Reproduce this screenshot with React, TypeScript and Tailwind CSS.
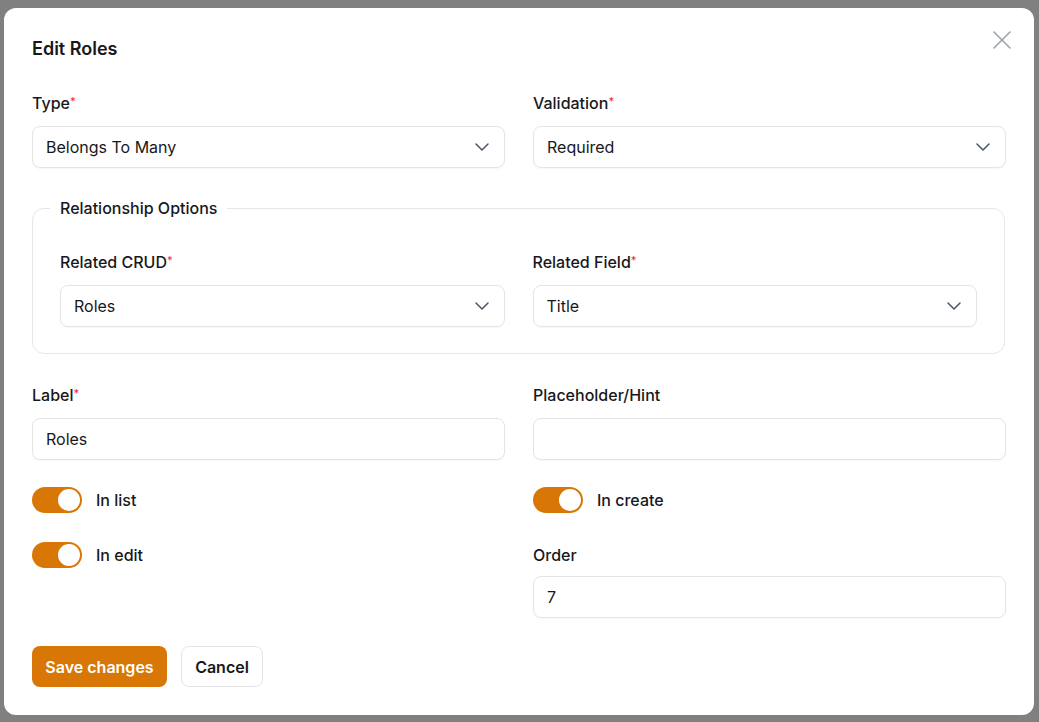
import { ChevronDown } from 'lucide-react'

function Label({ text, required }: { text: string; required?: boolean }) {
  return (
    <div className="text-[16px] leading-[24px] font-medium text-[#18181b] mb-[11px]">
      {text}
      {required && <sup className="text-red-500 text-[11px] relative -top-[4px]">*</sup>}
    </div>
  )
}

function Select({ value }: { value: string }) {
  return (
    <div className="h-[42px] rounded-[8px] border border-[#e4e4e7] shadow-[0_1px_2px_rgba(0,0,0,0.04)] flex items-center justify-between pl-[13px] pr-[10px] text-[16px] text-[#18181b]">
      <span>{value}</span>
      <ChevronDown size={24} strokeWidth={1.5} className="text-[#4b5563]" />
    </div>
  )
}

function Input({ value }: { value?: string }) {
  return (
    <div className="h-[42px] rounded-[8px] border border-[#e4e4e7] shadow-[0_1px_2px_rgba(0,0,0,0.04)] flex items-center pl-[13px] text-[16px] text-[#18181b]">
      {value}
    </div>
  )
}

function Toggle({ label }: { label: string }) {
  return (
    <div className="flex items-center h-[26px]">
      <div className="w-[50px] h-[26px] rounded-full bg-[#d97706] flex items-center justify-end pr-[2px]">
        <div className="w-[22px] h-[22px] rounded-full bg-white" />
      </div>
      <span className="ml-[14px] text-[16px] font-medium text-[#18181b]">{label}</span>
    </div>
  )
}

export default function App() {
  return (
    <div className="w-[1039px] h-[722px] bg-[#808080] flex font-['Inter',sans-serif] overflow-hidden">
      <div className="ml-[4px] mt-[8px] w-[1030px] h-[707px] bg-white rounded-[12px] px-[28px] pt-[27px] relative">
        <button className="absolute right-[22px] top-[22px] flex text-[#9ca3af]">
          <svg width="20" height="20" viewBox="0 0 20 20" fill="none" stroke="currentColor" strokeWidth="1.6" strokeLinecap="round">
            <path d="M2 2L18 18M18 2L2 18" />
          </svg>
        </button>
        <h2 className="text-[18px] leading-[28px] font-semibold text-[#18181b]">Edit Roles</h2>

        <div className="grid grid-cols-2 gap-x-[28px] mt-[28px]">
          <div>
            <Label text="Type" required />
            <Select value="Belongs To Many" />
          </div>
          <div>
            <Label text="Validation" required />
            <Select value="Required" />
          </div>
        </div>

        <fieldset className="mt-[28px] border border-[#e5e7eb] rounded-[12px] pl-[17px] pr-[17px] pb-[26px] mr-[1px]">
          <legend className="px-[10px] text-[16px] leading-[24px] font-medium text-[#18181b]">Relationship Options</legend>
          <div className="grid grid-cols-2 gap-x-[28px] px-[10px] pt-[30px]">
            <div>
              <Label text="Related CRUD" required />
              <Select value="Roles" />
            </div>
            <div>
              <Label text="Related Field" required />
              <Select value="Title" />
            </div>
          </div>
        </fieldset>

        <div className="grid grid-cols-2 gap-x-[28px] mt-[29px]">
          <div>
            <Label text="Label" required />
            <Input value="Roles" />
          </div>
          <div>
            <Label text="Placeholder/Hint" />
            <Input />
          </div>
        </div>

        <div className="grid grid-cols-2 gap-x-[28px] mt-[27px]">
          <div className="flex flex-col gap-[29px]">
            <Toggle label="In list" />
            <Toggle label="In edit" />
          </div>
          <div>
            <Toggle label="In create" />
            <div className="mt-[30px]">
              <div className="text-[16px] leading-[24px] font-medium text-[#18181b] mb-[9px]">Order</div>
              <Input value="7" />
            </div>
          </div>
        </div>

        <div className="flex gap-[14px] mt-[28px]">
          <button className="h-[41px] w-[135px] rounded-[8px] bg-[#d97706] text-white text-[16px] font-semibold">
            Save changes
          </button>
          <button className="h-[41px] w-[82px] rounded-[8px] bg-white border border-[#e4e4e7] text-[#18181b] text-[16px] font-semibold">
            Cancel
          </button>
        </div>
      </div>
    </div>
  )
}
